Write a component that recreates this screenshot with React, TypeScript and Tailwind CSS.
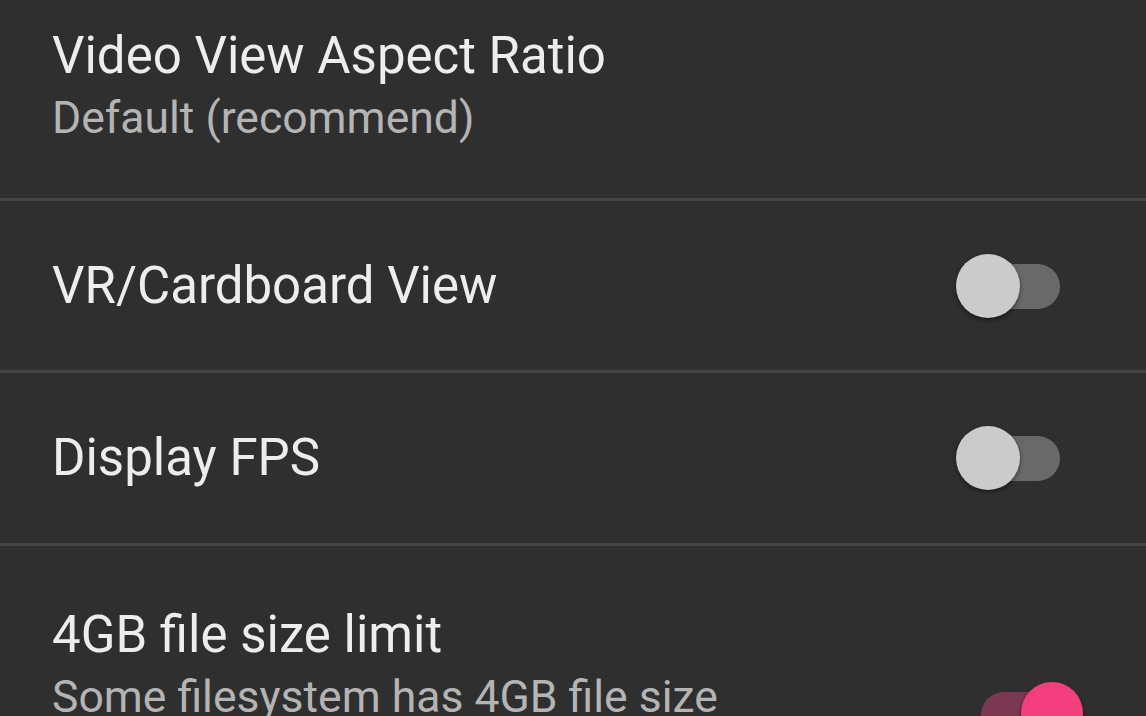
import React from 'react';

const font = { fontFamily: 'Roboto, "Noto Sans", sans-serif' };

function Toggle({ on }: { on: boolean }) {
  if (on) {
    return (
      <div className="relative h-[64px] w-[104px] shrink-0">
        <div className="absolute left-[2px] right-[4px] top-[10px] h-[46px] rounded-full bg-[#7a3853]" />
        <div className="absolute right-0 top-0 h-[62px] w-[62px] rounded-full bg-[#f43f7f] shadow-[0_2px_4px_rgba(0,0,0,0.5)]" />
      </div>
    );
  }
  return (
    <div className="relative h-[64px] w-[104px] shrink-0">
      <div className="absolute left-[6px] right-0 top-[10px] h-[45px] rounded-full bg-[#696969]" />
      <div className="absolute left-0 top-0 h-[64px] w-[64px] rounded-full bg-[#cbcbcb] shadow-[0_2px_4px_rgba(0,0,0,0.5)]" />
    </div>
  );
}

function Divider() {
  return <div className="h-[3px] bg-[#454545]" />;
}

export default function App() {
  return (
    <div className="h-[716px] w-[1146px] overflow-hidden bg-[#2f2f2f]" style={font}>
      <div className="flex flex-col">
        {/* Aspect ratio */}
        <div className="flex h-[198px] flex-col pl-[52px] pr-[86px] pt-[26px]">
          <div className="text-[51px] leading-[60px] text-[#ededed]">Video View Aspect Ratio</div>
          <div className="mt-[6px] text-[44.5px] leading-[52px] text-[#b4b4b4]">Default (recommend)</div>
        </div>
        <Divider />

        {/* VR */}
        <div className="flex h-[169px] items-center justify-between pl-[52px] pr-[86px]">
          <div className="text-[51px] leading-[60px] text-[#ededed]">VR/Cardboard View</div>
          <Toggle on={false} />
        </div>
        <Divider />

        {/* FPS */}
        <div className="flex h-[170px] items-center justify-between pl-[52px] pr-[86px]">
          <div className="text-[51px] leading-[60px] text-[#ededed]">Display FPS</div>
          <Toggle on={false} />
        </div>
        <Divider />

        {/* 4GB */}
        <div className="flex items-start justify-between pl-[52px] pr-[63px] pt-[59px]">
          <div className="flex flex-col">
            <div className="text-[51px] leading-[60px] text-[#ededed]">4GB file size limit</div>
            <div className="mt-[6px] text-[44.5px] leading-[52px] text-[#b4b4b4]">Some filesystem has 4GB file size</div>
          </div>
          <div className="mt-[77px]">
            <Toggle on={true} />
          </div>
        </div>
      </div>
    </div>
  );
}
